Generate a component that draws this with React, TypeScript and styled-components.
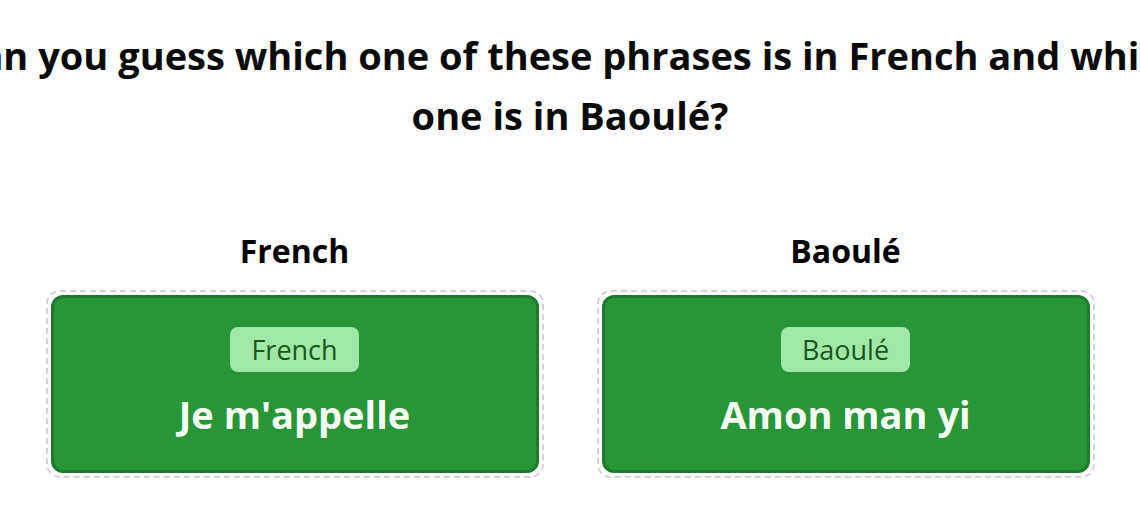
import React from "react";
import styled, { createGlobalStyle } from "styled-components";

const Global = createGlobalStyle`
  html, body { margin: 0; padding: 0; background: #ffffff; overflow: hidden; }
  body { font-family: "Open Sans", "Noto Sans", sans-serif; color: #000; }
`;

const Page = styled.main`
  width: 1140px;
  display: flex;
  flex-direction: column;
  align-items: center;
`;

const TitleRow = styled.div`
  width: 100%;
  display: flex;
  justify-content: center;
  margin-top: 25px;
`;

const Title = styled.h1`
  flex-shrink: 0;
  margin: 0;
  font-size: 38px;
  line-height: 60px;
  font-weight: 700;
  text-align: center;
  white-space: nowrap;
  color: #0a0a0a;
`;

const Columns = styled.div`
  display: grid;
  grid-template-columns: 498px 498px;
  column-gap: 53px;
  margin-top: 84px;
`;

const Column = styled.section`
  display: flex;
  flex-direction: column;
  align-items: center;
`;

const ColumnTitle = styled.h2`
  margin: 0 0 17px;
  font-size: 32px;
  line-height: 44px;
  font-weight: 700;
`;

const DropZone = styled.div`
  align-self: stretch;
  border: 2px dashed #d2d2d8;
  border-radius: 14px;
  padding: 3px;
`;

const Card = styled.div`
  height: 178px;
  box-sizing: border-box;
  background: #289637;
  border: 3px solid #1f7a2b;
  border-radius: 12px;
  display: flex;
  flex-direction: column;
  align-items: center;
  padding-top: 29px;
`;

const Badge = styled.span`
  background: #a0e8a6;
  color: #18561f;
  font-size: 27px;
  line-height: 45px;
  padding: 0 21px;
  border-radius: 8px;
`;

const Phrase = styled.div`
  margin-top: 15px;
  color: #f4fff4;
  font-size: 38px;
  line-height: 54px;
  font-weight: 700;
`;

const items = [
  { heading: "French", badge: "French", phrase: "Je m'appelle" },
  { heading: "Baoulé", badge: "Baoulé", phrase: "Amon man yi" },
];

export default function App() {
  return (
    <Page>
      <Global />
      <TitleRow>
        <Title>
          Can you guess which one of these phrases is in French and which
          <br />
          one is in Baoulé?
        </Title>
      </TitleRow>
      <Columns>
        {items.map((it) => (
          <Column key={it.heading}>
            <ColumnTitle>{it.heading}</ColumnTitle>
            <DropZone>
              <Card>
                <Badge>{it.badge}</Badge>
                <Phrase>{it.phrase}</Phrase>
              </Card>
            </DropZone>
          </Column>
        ))}
      </Columns>
    </Page>
  );
}
